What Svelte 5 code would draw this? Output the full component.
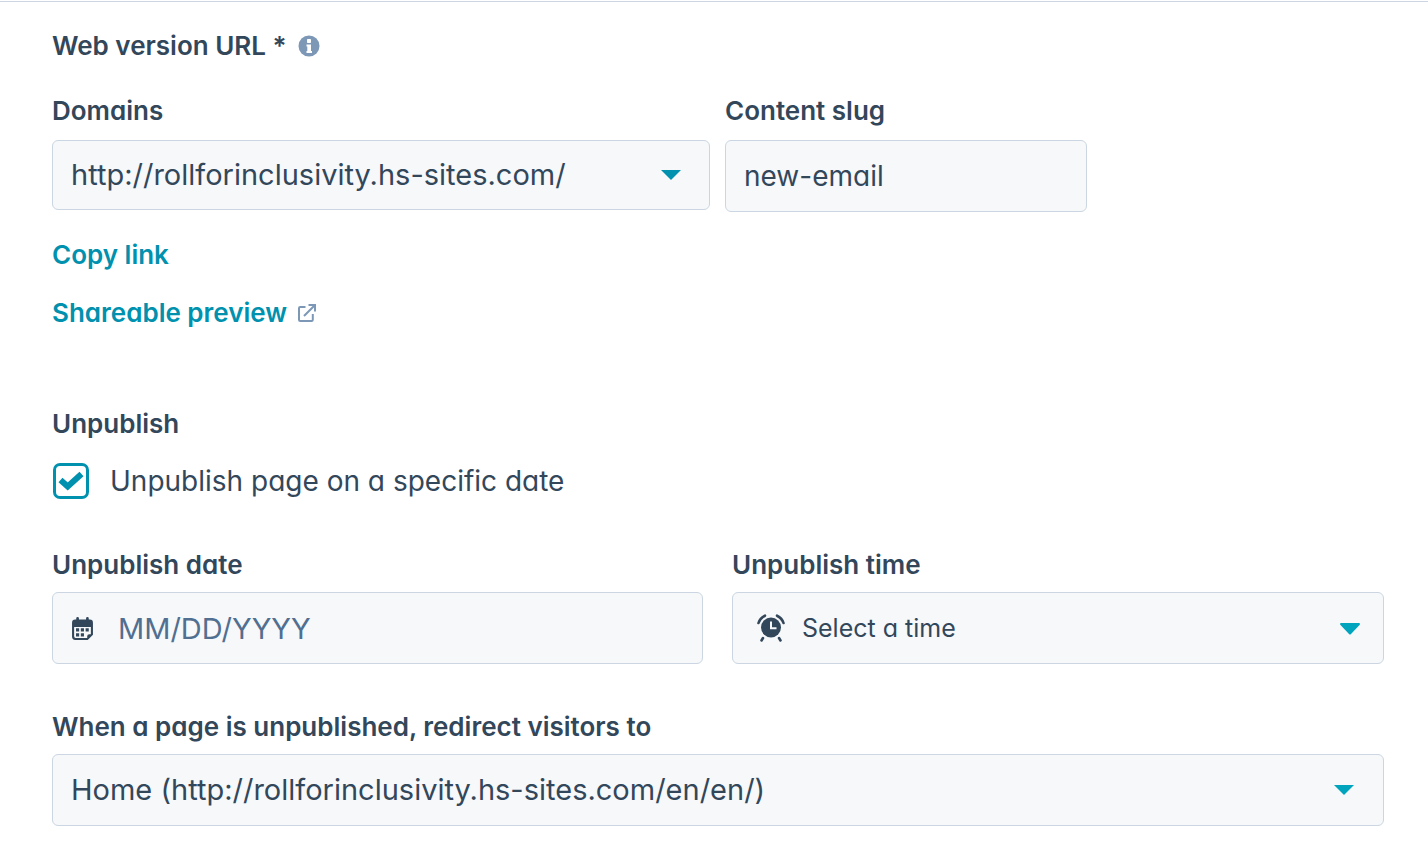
<script>
  const domains = ["http://rollforinclusivity.hs-sites.com/"];
  const times = ["Select a time"];
  const redirects = ["Home (http://rollforinclusivity.hs-sites.com/en/en/)"];

  let domain = $state(domains[0]);
  let slug = $state("new-email");
  let unpublish = $state(true);
  let date = $state("");
  let time = $state(times[0]);
  let redirect = $state(redirects[0]);
</script>

{#snippet caret()}
  <svg class="caret" viewBox="0 0 20 10" aria-hidden="true">
    <path d="M0 0h20L10 10z" />
  </svg>
{/snippet}

<main class="settings">
  <section class="web-version">
    <h2>
      Web version URL *
      <svg class="info" viewBox="0 0 22 22" aria-hidden="true">
        <circle cx="11" cy="11" r="10.5" fill="#7c98b6" />
        <rect x="9" y="4" width="4" height="4" rx="0.8" fill="#fff" />
        <path d="M8.5 9.5H13V16h1v2H8.5v-2h.8v-4.500h-.8z" fill="#fff" />
      </svg>
    </h2>

    <div class="url-row">
      <div class="field">
        <label for="domain">Domains</label>
        <div class="control">
          <select id="domain" class="short" bind:value={domain}>
            {#each domains as option}
              <option>{option}</option>
            {/each}
          </select>
          {@render caret()}
        </div>
      </div>
      <div class="field">
        <label for="slug">Content slug</label>
        <input id="slug" type="text" bind:value={slug} />
      </div>
    </div>

    <div class="links">
      <a href="#copy">Copy link</a>
      <a href="#preview">
        Shareable preview
        <svg class="external" viewBox="0 0 18 18" aria-hidden="true">
          <path d="M7.5 3H2.2Q1 3 1 4.2v11.6Q1 17 2.2 17h11.4q1.2 0 1.2-1.2V10" />
          <path d="M6 12 16.5 1.5M10.5 1H17v6.5" />
        </svg>
      </a>
    </div>
  </section>

  <section class="unpublish">
    <h2>Unpublish</h2>
    <label class="check">
      <input type="checkbox" bind:checked={unpublish} />
      <svg viewBox="0 0 26 20" aria-hidden="true">
        <path d="M2.5 9 9.7 15.5 23.5 3" />
      </svg>
      <span>Unpublish page on a specific date</span>
    </label>

    <div class="date-row">
      <div class="field">
        <label for="date">Unpublish date</label>
        <div class="control">
          <svg class="calendar" viewBox="0 0 20 22" aria-hidden="true">
            <path
              d="M3 2.5h1V1.4a1.3 1.3 0 0 1 2.6 0v1.1h6.8V1.4a1.3 1.3 0 0 1 2.6 0v1.1h1a3 3 0 0 1 3 3V17l-5 5H3a3 3 0 0 1-3-3V5.5a3 3 0 0 1 3-3z"
              fill="#33475b"
            />
            <path
              d="M2 9.500h16v7h-1.500a2 2 0 0 0-2 2V20H3.5Q2 20 2 18.5z"
              fill="#f6f8fa"
            />
            <path
              d="M3.8 10.8h3v3h-3zM8.400 10.800h3v3h-3zM13 10.800h3v3h-3zM3.800 15.600h3v3h-3zM8.400 15.600h3v3h-3z"
              fill="#33475b"
            />
          </svg>
          <input
            id="date"
            class="with-calendar"
            type="text"
            placeholder="MM/DD/YYYY"
            bind:value={date}
          />
        </div>
      </div>
      <div class="field">
        <label for="time">Unpublish time</label>
        <div class="control">
          <svg class="clock" viewBox="0 0 28 28" aria-hidden="true">
            <circle cx="14" cy="13.5" r="10" fill="#33475b" />
            <path d="M14 7.5V14.3h5.5" stroke="#f6f8fa" stroke-width="2" />
            <path
              d="M1.5 9Q3 4 8 1.7M26.5 9Q25 4 20 1.7M6 24l-1.5 2.5M22 24l1.5 2.5"
              stroke="#33475b"
              stroke-width="2.6"
              stroke-linecap="round"
            />
          </svg>
          <select id="time" class="with-clock" bind:value={time}>
            {#each times as option}
              <option>{option}</option>
            {/each}
          </select>
          <svg class="caret bright time-caret" viewBox="0 0 20 12" aria-hidden="true">
            <path d="M1.2 0h17.6q2 .4.7 2L11 11q-1 1-2 0L.5 2Q-.8.4 1.2 0z" />
          </svg>
        </div>
      </div>
    </div>

    <div class="field redirect">
      <label for="redirect">When a page is unpublished, redirect visitors to</label>
      <div class="control last">
        <select id="redirect" bind:value={redirect}>
          {#each redirects as option}
            <option>{option}</option>
          {/each}
        </select>
        {@render caret()}
      </div>
    </div>
  </section>
</main>

<style>
  :global(body) {
    background: #fff;
  }

  .settings {
    margin-top: 1px;
    padding: 28px 44px 34px 52px;
    border-top: 1px solid #cbd6e2;
    color: #33475b;
    font-family: Inter, "Open Sans", sans-serif;
    font-feature-settings: "cv11";
    font-size: 26px;
    line-height: 32px;
  }

  h2,
  .field label {
    display: block;
    margin: 0;
    font-size: 26px;
    font-weight: 600;
  }

  h2 {
    display: flex;
    align-items: center;
    gap: 11px;
  }

  .info {
    width: 22px;
    height: 22px;
  }

  .url-row {
    display: grid;
    grid-template-columns: 658fr 362fr 282fr;
    gap: 15px;
    margin-top: 33px;
  }

  .field label {
    margin-bottom: 11px;
  }

  .url-row .field label {
    margin-bottom: 13px;
  }

  .control {
    position: relative;
  }

  select,
  input[type="text"] {
    display: block;
    box-sizing: border-box;
    width: 100%;
    height: 72px;
    margin: 0;
    padding: 0 18px;
    border: 1px solid #cbd6e2;
    border-radius: 6px;
    background: #f6f8fa;
    color: #33475b;
    font: inherit;
    font-feature-settings: inherit;
    font-size: 29px;
    font-weight: 400;
    appearance: none;
  }

  #slug {
    font-size: 28px;
  }

  select.short {
    height: 70px;
  }

  input.with-calendar {
    padding-left: 65px;
  }

  input::placeholder {
    color: #516f90;
    opacity: 1;
  }

  select.with-clock {
    padding-left: 69px;
    font-size: 25px;
  }

  .caret {
    position: absolute;
    top: 50%;
    right: 29px;
    width: 20px;
    height: 10px;
    margin-top: -5px;
    fill: #0091ae;
    pointer-events: none;
  }

  .last .caret,
  .caret.bright {
    fill: #00a4bd;
  }

  .last .caret {
    right: 30px;
  }

  .time-caret {
    right: 24px;
    height: 12px;
  }

  .calendar,
  .clock {
    position: absolute;
    top: 25px;
    left: 20px;
    width: 21px;
    height: 23px;
    pointer-events: none;
  }

  .clock {
    top: 22px;
    left: 25px;
    width: 28px;
    height: 28px;
    fill: none;
  }

  .links {
    display: flex;
    flex-direction: column;
    align-items: flex-start;
    gap: 26px;
    margin-top: 27px;
  }

  .links a {
    display: flex;
    align-items: center;
    gap: 11px;
    color: #0091ae;
    font-weight: 600;
    text-decoration: none;
  }

  .external {
    width: 18px;
    height: 18px;
    fill: none;
    stroke: #7c98b6;
    stroke-width: 2;
  }

  .unpublish {
    margin-top: 79px;
  }

  .check {
    display: grid;
    grid-template-columns: 36px 1fr;
    align-items: center;
    column-gap: 21px;
    width: fit-content;
    margin: 23px 0 0 1px;
    font-size: 28px;
    font-weight: 400;
    line-height: 36px;
  }

  .check input {
    grid-area: 1 / 1;
    box-sizing: border-box;
    width: 36px;
    height: 36px;
    margin: 0;
    border: 3px solid #0091ae;
    border-radius: 7px;
    background: #fff;
    appearance: none;
  }

  .check svg {
    grid-area: 1 / 1;
    justify-self: center;
    width: 26px;
    height: 20px;
    fill: none;
    stroke: #0091ae;
    stroke-width: 6;
    pointer-events: none;
  }

  .check input:not(:checked) + svg {
    visibility: hidden;
  }

  .date-row {
    display: grid;
    grid-template-columns: 651fr 652fr;
    gap: 29px;
    margin-top: 50px;
  }

  .redirect {
    margin-top: 47px;
  }
</style>
